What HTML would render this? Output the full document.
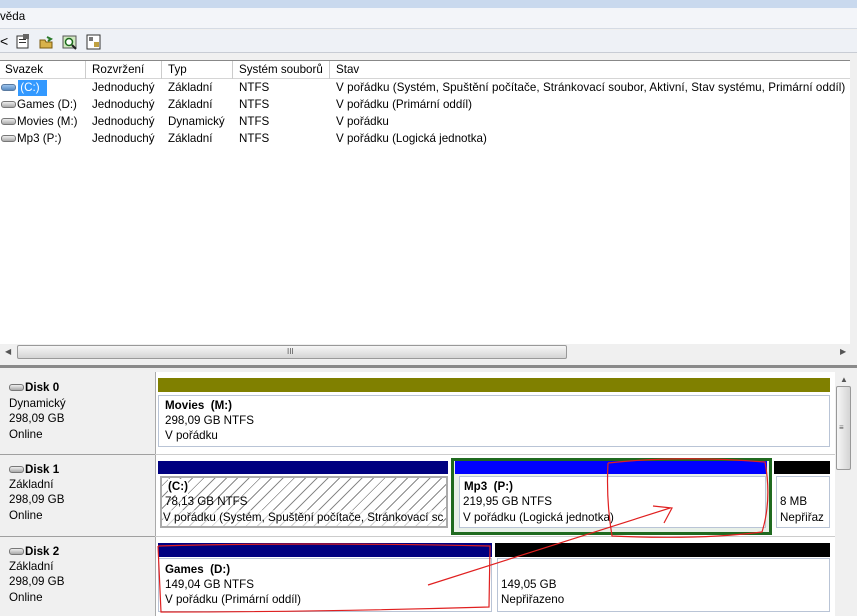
<!DOCTYPE html>
<html><head><meta charset="utf-8"><style>
*{margin:0;padding:0;box-sizing:border-box}
body{width:857px;height:616px;overflow:hidden;position:relative;background:#f0f0f0;font-family:"Liberation Sans",sans-serif;font-size:11.6px;color:#000}
.a{position:absolute}
.t{position:absolute;white-space:nowrap;line-height:16px}
.b{font-weight:bold}
.box{position:absolute;background:#fff;border:1px solid #b9c4d6}
.hatch{background:repeating-linear-gradient(135deg,#fff 0 5px,#8a8a8a 5px 6px,#fff 6px 8px)}
.lbl{position:absolute;left:0;width:155px;background:#f0f0f0;border-bottom:1px solid #a0a0a0}
.drv{display:inline-block;width:15px;height:7px;border:1px solid #777;border-radius:3px;background:linear-gradient(#eee,#aaa);margin-right:1px;vertical-align:0}
</style></head><body>
<div class="a" style="left:0;top:0;width:857px;height:8px;background:#c9d9ee"></div>
<div class="a" style="left:0;top:8px;width:857px;height:21px;background:#f3f5f9;border-bottom:1px solid #d5dbe4"></div>
<div class="t" style="left:0;top:9px">věda</div>
<div class="a" style="left:0;top:30px;width:857px;height:23px;background:#eef1f6;border-bottom:1px solid #c8ccd4"></div>
<div class="t" style="left:0;top:33px;font-size:14px">&lt;</div>
<svg class="a" style="left:14px;top:33px" width="100" height="18">
<rect x="3" y="3" width="11" height="12" fill="#fff" stroke="#333"/><rect x="5" y="6" width="7" height="1" fill="#333"/><rect x="5" y="9" width="7" height="1" fill="#333"/><rect x="9" y="1" width="6" height="5" fill="#666"/>
<path d="M26 7h5l1 2h6v6H26z" fill="#d8b24a" stroke="#7a5a10"/><path d="M33 4l4 2-3 2" stroke="#2a7a2a" fill="none" stroke-width="2"/>
<rect x="49" y="3" width="13" height="12" fill="#d0e8c0" stroke="#555"/><circle cx="55" cy="9" r="3.5" fill="#fff" stroke="#1a6a1a" stroke-width="1.5"/><path d="M58 12l4 4" stroke="#222" stroke-width="2"/>
<rect x="73" y="2" width="13" height="14" fill="#fff" stroke="#333"/><rect x="75" y="4" width="4" height="4" fill="#777"/><rect x="80" y="9" width="5" height="5" fill="#c0a040"/>
</svg>
<div class="a" style="left:0;top:60px;width:851px;height:284px;background:#fff;border-top:1px solid #888"></div>
<div class="a" style="left:850px;top:60px;width:7px;height:300px;background:#f0f0f0"></div>
<div class="a" style="left:0;top:61px;width:850px;height:18px;background:#fff;border-bottom:1px solid #d5d5d5"></div>
<div class="a" style="left:85px;top:61px;width:1px;height:18px;background:#ccc"></div>
<div class="a" style="left:161px;top:61px;width:1px;height:18px;background:#ccc"></div>
<div class="a" style="left:232px;top:61px;width:1px;height:18px;background:#ccc"></div>
<div class="a" style="left:329px;top:61px;width:1px;height:18px;background:#ccc"></div>
<div class="t" style="left:5px;top:62px">Svazek</div><div class="t" style="left:92px;top:62px">Rozvržení</div><div class="t" style="left:168px;top:62px">Typ</div><div class="t" style="left:239px;top:62px">Systém souborů</div><div class="t" style="left:336px;top:62px">Stav</div>
<div class="a" style="left:18px;top:80px;width:29px;height:16px;background:#3399ff"></div>
<div class="t" style="left:1px;top:80px"><span class="drv" style="background:linear-gradient(#9cc4ee,#5a8ac0);border-color:#5a7aa0"></span> <span style="color:#fff">(C:)</span></div>
<div class="t" style="left:1px;top:97px"><span class="drv"></span>Games (D:)</div>
<div class="t" style="left:1px;top:114px"><span class="drv"></span>Movies (M:)</div>
<div class="t" style="left:1px;top:131px"><span class="drv"></span>Mp3 (P:)</div>
<div class="t" style="left:92px;top:80px">Jednoduchý</div><div class="t" style="left:92px;top:97px">Jednoduchý</div><div class="t" style="left:92px;top:114px">Jednoduchý</div><div class="t" style="left:92px;top:131px">Jednoduchý</div>
<div class="t" style="left:168px;top:80px">Základní</div><div class="t" style="left:168px;top:97px">Základní</div><div class="t" style="left:168px;top:114px">Dynamický</div><div class="t" style="left:168px;top:131px">Základní</div>
<div class="t" style="left:239px;top:80px">NTFS</div><div class="t" style="left:239px;top:97px">NTFS</div><div class="t" style="left:239px;top:114px">NTFS</div><div class="t" style="left:239px;top:131px">NTFS</div>
<div class="t" style="left:336px;top:80px;letter-spacing:0.07px">V pořádku (Systém, Spuštění počítače, Stránkovací soubor, Aktivní, Stav systému, Primární oddíl)</div>
<div class="t" style="left:336px;top:97px">V pořádku (Primární oddíl)</div>
<div class="t" style="left:336px;top:114px">V pořádku</div>
<div class="t" style="left:336px;top:131px">V pořádku (Logická jednotka)</div>
<div class="a" style="left:0;top:344px;width:851px;height:16px;background:#f0f0f0"></div>
<div class="t" style="left:5px;top:344px;font-size:8px;color:#555">◀</div>
<div class="t" style="left:840px;top:344px;font-size:8px;color:#555">▶</div>
<div class="a" style="left:17px;top:345px;width:550px;height:14px;border:1px solid #999;border-radius:2px;background:linear-gradient(#f6f6f6,#d4d4d4)"></div>
<div class="t" style="left:287px;top:344px;font-size:8px;color:#555">III</div>
<div class="a" style="left:0;top:365px;width:857px;height:3px;background:#8a8a8a"></div>
<div class="a" style="left:155px;top:372px;width:680px;height:244px;background:#fff"></div>
<div class="a" style="left:155px;top:372px;width:1px;height:244px;background:#aaa"></div>
<div class="a" style="left:835px;top:368px;width:22px;height:248px;background:#f0f0f0"></div>
<div class="t" style="left:840px;top:372px;font-size:8px;color:#555">▲</div>
<div class="a" style="left:836px;top:386px;width:15px;height:84px;border:1px solid #999;border-radius:2px;background:linear-gradient(90deg,#f6f6f6,#d4d4d4)"></div>
<div class="t" style="left:839px;top:420px;font-size:8px;color:#555">≡</div>

<div class="lbl" style="top:372px;height:83px"></div>
<div class="t b" style="left:9px;top:380px"><span class="drv"></span>Disk 0</div>
<div class="t" style="left:9px;top:396px">Dynamický</div><div class="t" style="left:9px;top:411px">298,09 GB</div><div class="t" style="left:9px;top:427px">Online</div>
<div class="a" style="left:158px;top:378px;width:672px;height:14px;background:#808000"></div>
<div class="box" style="left:158px;top:395px;width:672px;height:52px"></div>
<div class="t b" style="left:165px;top:398px">Movies&nbsp; (M:)</div><div class="t" style="left:165px;top:413px">298,09 GB NTFS</div><div class="t" style="left:165px;top:428px">V pořádku</div>
<div class="a" style="left:155px;top:454px;width:680px;height:1px;background:#ccc"></div>

<div class="lbl" style="top:456px;height:81px"></div>
<div class="t b" style="left:9px;top:462px"><span class="drv"></span>Disk 1</div>
<div class="t" style="left:9px;top:477px">Základní</div><div class="t" style="left:9px;top:492px">298,09 GB</div><div class="t" style="left:9px;top:508px">Online</div>
<div class="a" style="left:158px;top:461px;width:290px;height:13px;background:#000080"></div>
<div class="box hatch" style="left:160px;top:476px;width:288px;height:52px;border:2px solid #aaa"></div>
<div class="t b" style="left:168px;top:479px;background:#fff">(C:)</div><div class="t" style="left:165px;top:494px">78,13 GB NTFS</div><div class="t" style="left:163px;top:510px;background:rgba(255,255,255,.6)">V pořádku (Systém, Spuštění počítače, Stránkovací sc</div>
<div class="a" style="left:451px;top:458px;width:321px;height:77px;border:3px solid #1f6a1f;background:#e8f0e8"></div>
<div class="a" style="left:455px;top:461px;width:312px;height:13px;background:#0000ff"></div>
<div class="box" style="left:459px;top:476px;width:307px;height:52px"></div>
<div class="t b" style="left:464px;top:479px">Mp3&nbsp; (P:)</div><div class="t" style="left:463px;top:494px">219,95 GB NTFS</div><div class="t" style="left:463px;top:510px">V pořádku (Logická jednotka)</div>
<div class="a" style="left:774px;top:461px;width:56px;height:13px;background:#000"></div>
<div class="box" style="left:776px;top:476px;width:54px;height:52px"></div>
<div class="t" style="left:780px;top:494px">8 MB</div><div class="t" style="left:780px;top:510px">Nepřiřaz</div>
<div class="a" style="left:155px;top:536px;width:680px;height:1px;background:#ccc"></div>

<div class="lbl" style="top:538px;height:78px;border:0"></div>
<div class="t b" style="left:9px;top:544px"><span class="drv"></span>Disk 2</div>
<div class="t" style="left:9px;top:559px">Základní</div><div class="t" style="left:9px;top:574px">298,09 GB</div><div class="t" style="left:9px;top:590px">Online</div>
<div class="a" style="left:158px;top:543px;width:334px;height:14px;background:#000080"></div>
<div class="box" style="left:158px;top:558px;width:334px;height:54px"></div>
<div class="t b" style="left:165px;top:562px">Games&nbsp; (D:)</div><div class="t" style="left:165px;top:577px">149,04 GB NTFS</div><div class="t" style="left:165px;top:592px">V pořádku (Primární oddíl)</div>
<div class="a" style="left:495px;top:543px;width:335px;height:14px;background:#000"></div>
<div class="box" style="left:497px;top:558px;width:333px;height:54px"></div>
<div class="t" style="left:501px;top:577px">149,05 GB</div><div class="t" style="left:501px;top:592px">Nepřiřazeno</div>

<svg class="a" style="left:0;top:0" width="857" height="616" fill="none" stroke="#e02020" stroke-width="1.2">
<path d="M158 546 Q300 542 490 546 L489 607 Q320 612 161 612 L158 546"/>
<path d="M608 463 Q680 455 765 462 Q772 500 762 532 Q700 540 612 536 Q606 500 608 463"/>
<path d="M428 585 L670 508 M653 506 L672 508 L664 523"/>
</svg>
</body></html>
